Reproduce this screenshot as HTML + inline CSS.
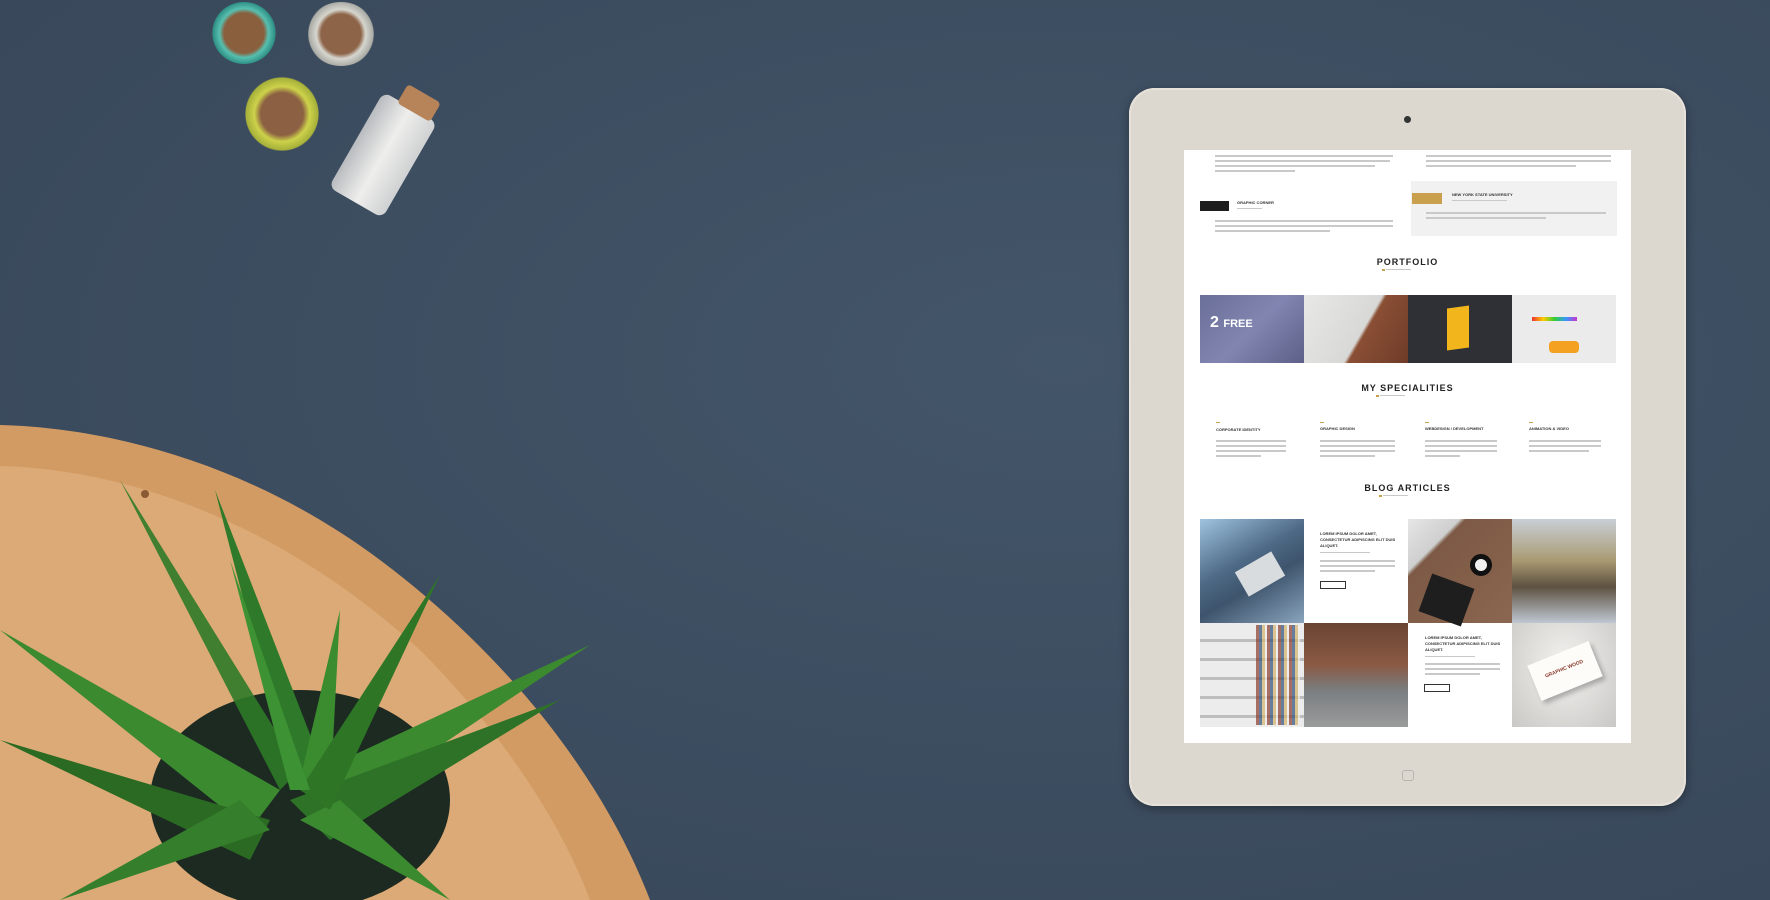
<!DOCTYPE html>
<html><head><meta charset="utf-8"><style>
*{margin:0;padding:0;box-sizing:border-box}
body{width:1770px;height:900px;overflow:hidden;background:#3e4f63;position:relative;font-family:"Liberation Sans",sans-serif}
.bg{position:absolute;inset:0;background:radial-gradient(ellipse at 60% 40%,#435569 0%,#3c4c5f 60%,#374658 100%)}
.abs{position:absolute}
.tablet{left:1129px;top:88px;width:557px;height:718px;background:#dcd8d0;border-radius:26px;box-shadow:0 3px 10px rgba(0,0,0,.35), inset 0 0 0 2px #e6e2da}
.screen{left:1184px;top:150px;width:447px;height:593px;background:#fff;overflow:hidden}
.l{position:absolute;height:2px;background:#c9c9c9}
.h{position:absolute;font-weight:bold;color:#222;letter-spacing:1px;font-size:9px;text-align:center;width:447px;left:0}
.t{position:absolute;height:94px;width:104px}
.sm{position:absolute;font-size:4px;font-weight:bold;color:#333}
</style></head><body>
<div class="bg"></div>
<!-- jars -->
<div class="abs" style="left:212px;top:2px;width:64px;height:62px;border-radius:50%;background:radial-gradient(circle,#8a5f3e 45%,#57c0b0 55%,#2f8f85 70%,transparent 72%)"></div>
<div class="abs" style="left:306px;top:2px;width:70px;height:64px;border-radius:50%;background:radial-gradient(circle,#8d6448 42%,#d6d6cf 52%,#a9aaa4 68%,transparent 70%)"></div>
<div class="abs" style="left:245px;top:76px;width:74px;height:76px;border-radius:50%;background:radial-gradient(circle,#8c6042 40%,#cdd24a 52%,#a6b03a 68%,transparent 70%)"></div>
<div class="abs" style="left:352px;top:100px;width:62px;height:110px;border-radius:8px;background:linear-gradient(90deg,#b9bcbf,#eeeeec,#cfd1d2);transform:rotate(30deg)"></div>
<div class="abs" style="left:400px;top:92px;width:38px;height:22px;border-radius:4px;background:#b78359;transform:rotate(30deg)"></div>
<!-- wood board -->
<svg class="abs" style="left:0;top:0" width="700" height="900">
<path d="M0 425 C120 428 260 470 380 560 C500 650 600 770 650 900 L0 900 Z" fill="#d29b63"/>
<path d="M0 466 C150 470 300 540 420 650 C500 730 560 820 590 900 L0 900 Z" fill="#dcaa76"/>
<circle cx="145" cy="494" r="4" fill="#8a5a34"/>
<g fill="#2f7a2a">
<ellipse cx="300" cy="800" rx="150" ry="110" fill="#1c2a22"/>
<path d="M290 780 L215 490 L320 760Z"/><path d="M300 780 L340 610 L330 800Z" fill="#3a8c2e"/>
<path d="M300 780 L590 645 L330 820Z" fill="#3b8a30"/><path d="M290 800 L560 700 L330 840Z" fill="#2d7226"/>
<path d="M280 790 L0 630 L250 830Z" fill="#3b8a30"/><path d="M270 820 L0 740 L250 860Z" fill="#2a6a22"/>
<path d="M280 790 L120 480 L300 770Z" fill="#2d7a28" opacity=".9"/>
<path d="M300 820 L450 900 L340 800Z" fill="#3b8a30"/><path d="M270 830 L60 900 L240 800Z" fill="#357f2c"/>
<path d="M300 790 L440 575 L330 810Z" fill="#2e7526"/><path d="M290 790 L230 560 L310 790Z" fill="#3d9233"/>
</g>
</svg>
<!-- tablet -->
<div class="abs tablet"></div>
<div class="abs" style="left:1404px;top:116px;width:7px;height:7px;border-radius:50%;background:#333"></div>
<div class="abs" style="left:1402px;top:770px;width:12px;height:11px;border-radius:3px;border:1px solid #b8b4ad"></div>
<div class="abs screen">
 <div class="l" style="left:31px;top:5px;width:178px"></div><div class="l" style="left:31px;top:10px;width:175px"></div><div class="l" style="left:31px;top:15px;width:160px"></div><div class="l" style="left:31px;top:20px;width:80px"></div>
 <div class="l" style="left:242px;top:5px;width:185px"></div><div class="l" style="left:242px;top:10px;width:185px"></div><div class="l" style="left:242px;top:15px;width:150px"></div>
 <div class="abs" style="left:16px;top:51px;width:29px;height:10px;background:#1d1d1d"></div>
 <div class="sm" style="left:53px;top:50px">GRAPHIC CORNER</div>
 <div class="l" style="left:53px;top:58px;width:25px;height:1px"></div>
 <div class="l" style="left:31px;top:70px;width:178px"></div><div class="l" style="left:31px;top:75px;width:178px"></div><div class="l" style="left:31px;top:80px;width:115px"></div>
 <div class="abs" style="left:227px;top:31px;width:206px;height:55px;background:#f1f1f1"></div>
 <div class="abs" style="left:228px;top:43px;width:30px;height:11px;background:#c9a04e"></div>
 <div class="sm" style="left:268px;top:42px">NEW YORK STATE UNIVERSITY</div>
 <div class="l" style="left:268px;top:50px;width:55px;height:1px"></div>
 <div class="l" style="left:242px;top:62px;width:180px"></div><div class="l" style="left:242px;top:67px;width:120px"></div>
 <div class="h" style="top:107px">PORTFOLIO</div>
 <div class="abs" style="left:198px;top:119px;width:3px;height:2px;background:#c9a04e"></div><div class="l" style="left:202px;top:119px;width:25px;height:1px"></div>
 <div class="t" style="left:16px;top:145px;height:68px;background:linear-gradient(135deg,#6a6f99,#8185b0 50%,#5d6088)"></div>
 <div class="abs" style="left:26px;top:164px;color:#fff;font-size:16px;font-weight:bold">2 <span style="font-size:11px">FREE</span></div>
 <div class="t" style="left:120px;top:145px;height:68px;background:linear-gradient(120deg,#e8e8e6 0%,#d8d8d6 55%,#8a4f35 58%,#6e3b28)"></div>
 <div class="t" style="left:224px;top:145px;height:68px;background:#2e3035"></div>
 <div class="abs" style="left:263px;top:157px;width:22px;height:42px;background:#f2b51b;transform:skewY(-8deg)"></div>
 <div class="t" style="left:328px;top:145px;height:68px;background:#ebebeb"></div>
 <div class="abs" style="left:348px;top:167px;width:45px;height:4px;background:linear-gradient(90deg,#e33,#fc0,#3c3,#39f,#c3c)"></div>
 <div class="abs" style="left:365px;top:191px;width:30px;height:12px;background:#f4a020;border-radius:4px"></div>
 <div class="h" style="top:233px">MY SPECIALITIES</div>
 <div class="abs" style="left:192px;top:245px;width:3px;height:2px;background:#c9a04e"></div><div class="l" style="left:196px;top:245px;width:25px;height:1px"></div>
 <div class="abs" style="left:32px;top:272px;width:4px;height:1px;background:#c9a04e"></div><div class="abs" style="left:136px;top:272px;width:4px;height:1px;background:#c9a04e"></div><div class="abs" style="left:241px;top:272px;width:4px;height:1px;background:#c9a04e"></div><div class="abs" style="left:345px;top:272px;width:4px;height:1px;background:#c9a04e"></div>
 <div class="sm" style="left:32px;top:277px">CORPORATE IDENTITY</div><div class="sm" style="left:136px;top:276px">GRAPHIC DESIGN</div><div class="sm" style="left:241px;top:276px">WEBDESIGN / DEVELOPMENT</div><div class="sm" style="left:345px;top:276px">ANIMATION &amp; VIDEO</div>
 <div class="l" style="left:32px;top:290px;width:70px"></div><div class="l" style="left:32px;top:295px;width:70px"></div><div class="l" style="left:32px;top:300px;width:70px"></div><div class="l" style="left:32px;top:305px;width:45px"></div>
 <div class="l" style="left:136px;top:290px;width:75px"></div><div class="l" style="left:136px;top:295px;width:75px"></div><div class="l" style="left:136px;top:300px;width:75px"></div><div class="l" style="left:136px;top:305px;width:55px"></div>
 <div class="l" style="left:241px;top:290px;width:72px"></div><div class="l" style="left:241px;top:295px;width:72px"></div><div class="l" style="left:241px;top:300px;width:72px"></div><div class="l" style="left:241px;top:305px;width:35px"></div>
 <div class="l" style="left:345px;top:290px;width:72px"></div><div class="l" style="left:345px;top:295px;width:72px"></div><div class="l" style="left:345px;top:300px;width:60px"></div>
 <div class="h" style="top:333px">BLOG ARTICLES</div>
 <div class="abs" style="left:195px;top:345px;width:3px;height:2px;background:#c9a04e"></div><div class="l" style="left:199px;top:345px;width:25px;height:1px"></div>
 <div class="t" style="left:16px;top:369px;height:104px;background:linear-gradient(150deg,#9fc3df 0%,#4e6a86 40%,#3d546c 60%,#8aa4bd 100%)"></div>
 <div class="abs" style="left:55px;top:410px;width:42px;height:28px;background:#d9dcdf;transform:rotate(-30deg)"></div>
 <div class="sm" style="left:136px;top:381px;line-height:6px;width:80px">LOREM IPSUM DOLOR AMET, CONSECTETUR ADIPISCING ELIT DUIS ALIQUET.</div>
 <div class="l" style="left:136px;top:402px;width:50px;height:1px"></div>
 <div class="l" style="left:136px;top:410px;width:75px"></div><div class="l" style="left:136px;top:415px;width:75px"></div><div class="l" style="left:136px;top:420px;width:55px"></div>
 <div class="abs" style="left:136px;top:431px;width:26px;height:8px;border:1px solid #333"></div>
 <div class="t" style="left:224px;top:369px;height:104px;background:linear-gradient(135deg,#e6e6e6 0%,#cfcfcf 25%,#7d5a45 28%,#8b6650 100%)"></div>
 <div class="abs" style="left:240px;top:430px;width:45px;height:40px;background:#1e1e1e;transform:rotate(20deg)"></div>
 <div class="abs" style="left:286px;top:404px;width:22px;height:22px;border-radius:50%;background:#f1f1f1;border:5px solid #111"></div>
 <div class="t" style="left:328px;top:369px;height:104px;background:linear-gradient(180deg,#c9cfd6,#a99a72 40%,#5d5140 65%,#bfc7d2)"></div>
 <div class="t" style="left:16px;top:473px;height:104px;background:repeating-linear-gradient(180deg,#ececec 0 16px,#bdbdbd 16px 19px)"></div>
 <div class="abs" style="left:72px;top:475px;width:44px;height:100px;background:repeating-linear-gradient(90deg,#8a3a2a 0 3px,#2d4f7a 3px 6px,#d4b36a 6px 9px,#eeeeee 9px 11px);opacity:.7"></div>
 <div class="t" style="left:120px;top:473px;height:104px;background:linear-gradient(180deg,#6a4433,#8a5a44 40%,#7a7e80 65%,#9b9b9b)"></div>
 <div class="sm" style="left:241px;top:485px;line-height:6px;width:80px">LOREM IPSUM DOLOR AMET, CONSECTETUR ADIPISCING ELIT DUIS ALIQUET.</div>
 <div class="l" style="left:241px;top:506px;width:50px;height:1px"></div>
 <div class="l" style="left:241px;top:513px;width:75px"></div><div class="l" style="left:241px;top:518px;width:75px"></div><div class="l" style="left:241px;top:523px;width:55px"></div>
 <div class="abs" style="left:240px;top:534px;width:26px;height:8px;border:1px solid #333"></div>
 <div class="t" style="left:328px;top:473px;height:104px;background:radial-gradient(ellipse at 50% 40%,#f3f2ef,#c9c8c5)"></div>
 <div class="abs" style="left:348px;top:502px;width:66px;height:38px;background:#fdfcf9;transform:rotate(-22deg);box-shadow:2px 4px 5px rgba(0,0,0,.25);font-size:5px;color:#8a3b2e;font-weight:bold;text-align:center;padding-top:14px">GRAPHIC WOOD</div>
</div>
</body></html>
